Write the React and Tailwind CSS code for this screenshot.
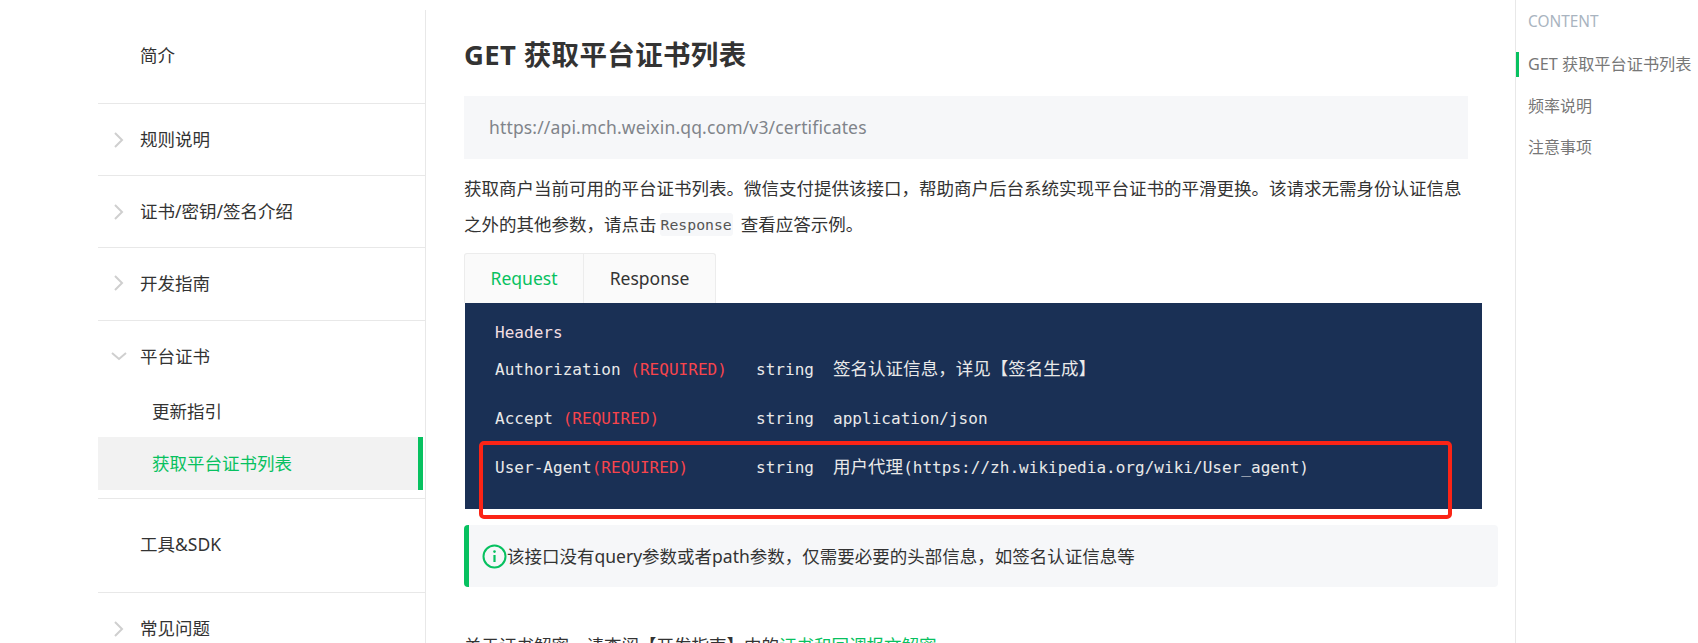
const CJK = '"Noto Sans", "Noto Sans CJK SC", sans-serif';
const COMMA = "\uFF0C";

const Chevron = ({ down }) => (
  <svg width="18" height="18" viewBox="0 0 18 18" fill="none" stroke="#cfcfcf" strokeWidth="2" className="shrink-0">
    {down ? <path d="M2 6l7 6 7-6" /> : <path d="M5 2l7 7-7 7" />}
  </svg>
);

const NavRow = ({ label, arrow, down, className = "h-[72px] border-b" }) => (
  <div className={`flex items-center border-[#e8e8e8] text-[17.5px] text-[#333] ${className}`}>
    <div className="w-[42px] pl-[12px]">{arrow && <Chevron down={down} />}</div>
    {label}
  </div>
);

const Sidebar = () => (
  <aside className="mt-[10px] ml-[98px] w-[328px] shrink-0 border-r border-[#e8e8e8] h-[633px]">
    <NavRow label="简介" className="h-[94px] border-b pb-[2px]" />
    <NavRow label="规则说明" arrow />
    <NavRow label="证书/密钥/签名介绍" arrow />
    <NavRow label="开发指南" arrow className="h-[73px] border-b pb-[2px]" />
    <div className="border-b border-[#e8e8e8] h-[178px]">
      <NavRow label="平台证书" arrow down className="h-[70px]" />
      <div className="h-[46px] pt-[7px] pl-[54px] text-[17.5px] text-[#333]">更新指引</div>
      <div className="flex items-center justify-between h-[53px] mr-[2px] bg-[#f2f2f2] pl-[54px] text-[17.5px] text-[#07c160]">
        获取平台证书列表
        <span className="w-[5px] h-full bg-[#07c160]" />
      </div>
    </div>
    <NavRow label="工具&SDK" className="h-[94px] border-b pb-[2px]" />
    <NavRow label="常见问题" arrow />
  </aside>
);

const Req = ({ children }) => <span className="text-[#f8444c]">{children}</span>;
const Han = ({ children }) => <span className="text-[17.5px]" style={{ fontFamily: CJK }}>{children}</span>;

const CodeRow = ({ name, desc, className = "" }) => (
  <div className={`flex h-[24px] items-baseline whitespace-pre ${className}`}>
    <div className="w-[261px]">{name}</div>
    <div className="w-[77px]">string</div>
    <div>{desc}</div>
  </div>
);

const CodeBlock = () => (
  <div className="relative w-[1017px] h-[206px] ml-[1px] bg-[#1a3055] pl-[30px] pt-[18px] text-[16px] tracking-[0.03px] leading-[24px] text-[#e9e9e9] font-['DejaVu_Sans_Mono',monospace]">
    <div className="h-[24px] text-[#f3dfe2]">Headers</div>
    <CodeRow className="mt-[11px]" name={<>Authorization <Req>(REQUIRED)</Req></>} desc={<Han>{`签名认证信息${COMMA}详见【签名生成】`}</Han>} />
    <CodeRow className="mt-[27px]" name={<>Accept <Req>(REQUIRED)</Req></>} desc="application/json" />
    <CodeRow className="mt-[23px]" name={<>User-Agent<Req>(REQUIRED)</Req></>} desc={<><Han>用户代理</Han>(https://zh.wikipedia.org/wiki/User_agent)</>} />
    {/* annotation drawn over the screenshot */}
    <div className="absolute left-[14px] top-[138px] w-[973px] h-[78px] rounded-[5px] border-[4px] border-[#fb2416]" />
  </div>
);

const InfoIcon = () => (
  <svg width="25" height="25" viewBox="0 0 25 25" fill="none" className="shrink-0">
    <circle cx="12.5" cy="12.5" r="11" stroke="#07c160" strokeWidth="2" />
    <circle cx="12.5" cy="7.6" r="1.3" fill="#07c160" />
    <path d="M12.5 11v7" stroke="#07c160" strokeWidth="2.2" />
  </svg>
);

const Main = () => (
  <main className="w-[1089px] shrink-0 pl-[38px] text-[17.5px] text-[#333]">
    <h1 className="mt-[37px] h-[36px] leading-[36px] text-[27.5px] tracking-[0.35px] font-bold text-[#333]">GET 获取平台证书列表</h1>
    <div className="mt-[23px] flex items-center w-[1004px] h-[63px] bg-[#f6f7f9] pl-[25px] tracking-[0.15px] text-[#80848a]">
      https://api.mch.weixin.qq.com/v3/certificates
    </div>
    <div className="mt-[11px] w-[1010px] leading-[36px]">
      <p>{`获取商户当前可用的平台证书列表。微信支付提供该接口${COMMA}帮助商户后台系统实现平台证书的平滑更换。该请求无需身份认证信息`}</p>
      <p className="flex items-center">
        {`之外的其他参数${COMMA}请点击`}
        <code className="mx-[3px] rounded-[3px] bg-[#f6f7f9] px-[1px] h-[23px] leading-[23px] text-[#555] text-[14.8px] font-['DejaVu_Sans_Mono',monospace]">Response</code>
        <span className="ml-[5px]">查看应答示例。</span>
      </p>
    </div>
    <div className="mt-[11px] flex h-[50px] w-[252px] rounded-t-[3px] border border-b-0 border-[#ececec] bg-[#fafafa]">
      <div className="flex items-center justify-center w-[119px] border-r border-[#ececec] text-[#07c160]">Request</div>
      <div className="flex items-center justify-center flex-1 text-[#333]">Response</div>
    </div>
    <CodeBlock />
    <div className="mt-[16px] flex items-center w-[1034px] h-[62px] rounded-[4px] border-l-[5px] border-[#07c160] bg-[#f6f7f9] pl-[13px]">
      <InfoIcon />
      {`该接口没有query参数或者path参数${COMMA}仅需要必要的头部信息${COMMA}如签名认证信息等`}
    </div>
    <p className="mt-[46px] leading-[24px]">{`关于证书解密${COMMA}请查阅【开发指南】中的`}<span className="text-[#07c160]">证书和回调报文解密</span></p>
  </main>
);

const Toc = () => (
  <aside className="flex-1 border-l border-[#e8e8e8] text-[16px] text-[#777] min-w-0">
    <div className="mt-[11px] h-[22px] leading-[22px] pl-[12px] text-[15.4px] text-[#a9b4c0]">CONTENT</div>
    <div className="mt-[19px] h-[25px] leading-[25px] border-l-[3px] border-[#07c160] pl-[9px] text-[16.2px] whitespace-nowrap">GET 获取平台证书列表</div>
    <div className="mt-[17px] h-[25px] leading-[25px] pl-[12px]">频率说明</div>
    <div className="mt-[16px] h-[25px] leading-[25px] pl-[12px]">注意事项</div>
  </aside>
);

export default function App() {
  return (
    <div className="flex h-[643px] w-[1698px] overflow-hidden bg-white" style={{ fontFamily: CJK }}>
      <Sidebar />
      <Main />
      <Toc />
    </div>
  );
}
